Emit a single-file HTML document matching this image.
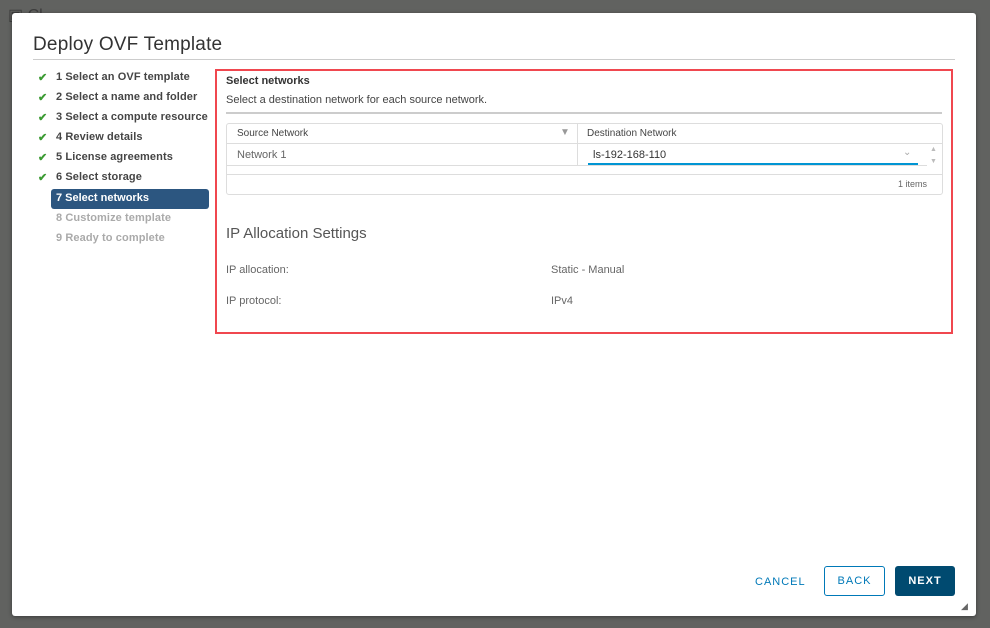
<!DOCTYPE html>
<html><head><style>
*{box-sizing:border-box;margin:0;padding:0}
body{width:990px;height:628px;background:#616260;font-family:"Liberation Sans",sans-serif;position:relative;overflow:hidden}
.bgt{position:absolute;color:#3d3d3d;font-size:16px}
.modal{position:absolute;left:12px;top:13px;width:964px;height:603px;background:#fff;border-radius:3px;box-shadow:0 1px 4px rgba(0,0,0,.4)}
h1{position:absolute;left:21px;top:21px;font-size:19px;font-weight:normal;color:#333;letter-spacing:.2px}
.hr{position:absolute;left:21px;top:46px;width:922px;height:1px;background:#ccc}
.step{position:absolute;left:44px;font-size:11px;font-weight:bold;color:#454545;letter-spacing:.1px}
.ck{position:absolute;left:26px;font-size:11px;color:#3c9b33;font-weight:bold}
.sel{position:absolute;left:39px;top:176px;width:158px;height:20px;background:#2c5680;border-radius:3px;color:#fff;font-size:11px;font-weight:bold;padding:3px 5px}
.dis{color:#aaa}
.box{position:absolute;left:203px;top:56px;width:738px;height:265px;border:2px solid #f0474f}
.t{position:absolute;font-size:11px;color:#444}
.g{color:#666}
</style></head><body>
<div class="bgt" style="left:8px;top:5px">▣ Cl</div>
<div class="modal">
<h1>Deploy OVF Template</h1>
<div class="hr"></div>
<span class="ck" style="top:58px">✔</span><div class="step" style="top:58px">1 Select an OVF template</div>
<span class="ck" style="top:78px">✔</span><div class="step" style="top:78px">2 Select a name and folder</div>
<span class="ck" style="top:98px">✔</span><div class="step" style="top:98px">3 Select a compute resource</div>
<span class="ck" style="top:118px">✔</span><div class="step" style="top:118px">4 Review details</div>
<span class="ck" style="top:138px">✔</span><div class="step" style="top:138px">5 License agreements</div>
<span class="ck" style="top:158px">✔</span><div class="step" style="top:158px">6 Select storage</div>
<div class="sel">7 Select networks</div>
<div class="step dis" style="top:199px">8 Customize template</div>
<div class="step dis" style="top:219px">9 Ready to complete</div>
<div class="box">
 <div class="t" style="left:9px;top:4px;font-weight:bold;color:#333">Select networks</div>
 <div class="t" style="left:9px;top:23px">Select a destination network for each source network.</div>
 <div style="position:absolute;left:9px;top:41px;width:716px;height:2px;background:#ccc"></div>
 <div style="position:absolute;left:9px;top:52px;width:717px;height:72px;border:1px solid #ddd;border-radius:3px">
  <div style="position:absolute;left:0;top:0;width:715px;height:20px;border-bottom:1px solid #ddd"></div>
  <div style="position:absolute;left:350px;top:0;width:1px;height:41px;background:#ddd"></div>
  <div class="t" style="left:10px;top:4px;font-size:10px">Source Network</div>
  <div class="t" style="left:333px;top:3px;font-size:10px;color:#999">▼</div>
  <div class="t" style="left:360px;top:4px;font-size:10px">Destination Network</div>
  <div class="t g" style="left:10px;top:25px">Network 1</div>
  <div class="t" style="left:366px;top:25px;color:#333">ls-192-168-110</div>
  <div class="t" style="left:676px;top:23px;color:#aaa;font-size:10px">⌄</div>
  <div style="position:absolute;left:361px;top:39px;width:330px;height:2px;background:#0095d3"></div>
  <div class="t" style="left:703px;top:22px;color:#bbb;font-size:7px">▲</div>
  <div class="t" style="left:703px;top:34px;color:#bbb;font-size:7px">▼</div>
  <div style="position:absolute;left:0;top:41px;width:700px;height:1px;background:#ddd"></div>
  <div style="position:absolute;left:0;top:50px;width:715px;height:1px;background:#ddd"></div>
  <div class="t g" style="left:671px;top:55px;font-size:9px">1 items</div>
 </div>
 <div class="t" style="left:9px;top:154px;font-size:15px;color:#555">IP Allocation Settings</div>
 <div class="t g" style="left:9px;top:193px">IP allocation:</div>
 <div class="t g" style="left:334px;top:193px">Static - Manual</div>
 <div class="t g" style="left:9px;top:224px">IP protocol:</div>
 <div class="t g" style="left:334px;top:224px">IPv4</div>
</div>
<div class="t" style="left:743px;top:563px;color:#0079b8;font-size:11px;letter-spacing:1px">CANCEL</div>
<div style="position:absolute;left:812px;top:553px;width:61px;height:30px;border:1px solid #0079b8;border-radius:3px;color:#0079b8;font-size:11px;letter-spacing:1px;text-align:center;line-height:28px">BACK</div>
<div style="position:absolute;left:883px;top:553px;width:60px;height:30px;background:#004a70;border-radius:3px;color:#fff;font-size:11px;letter-spacing:1px;text-align:center;line-height:30px;font-weight:bold">NEXT</div>
<div class="t" style="left:949px;top:588px;color:#666;font-size:9px">◢</div>
</div>
</body></html>
